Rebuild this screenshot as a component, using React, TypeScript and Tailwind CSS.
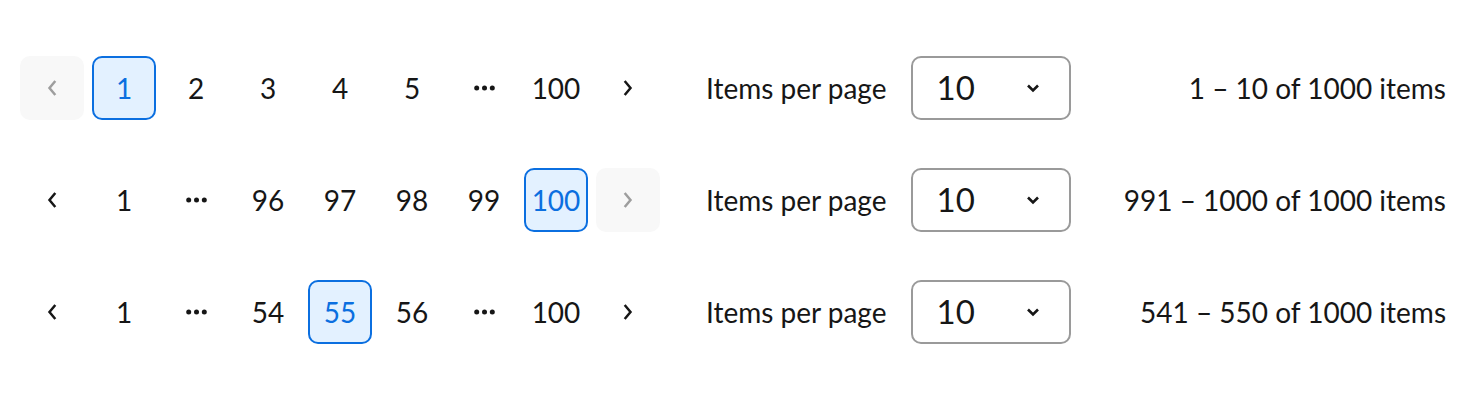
import React from 'react';

type PageItem = number | 'dots';

interface RowProps {
  pages: PageItem[];
  current: number;
  prevDisabled?: boolean;
  nextDisabled?: boolean;
  range: string;
}

const Chevron = ({ dir, disabled }: { dir: 'left' | 'right'; disabled?: boolean }) => (
  <svg width="12" height="18" viewBox="0 0 12 18" fill="none" className={disabled ? 'text-[#9e9e9e]' : 'text-[#161616]'}>
    <polyline
      points={dir === 'left' ? '8.5,3 3.5,9 8.5,15' : '3.5,3 8.5,9 3.5,15'}
      stroke="currentColor"
      strokeWidth="2.5"
      strokeLinecap="square"
      strokeLinejoin="miter"
    />
  </svg>
);

const Dots = () => (
  <svg width="21" height="6" viewBox="0 0 21 6">
    <circle cx="2.7" cy="3" r="2.5" fill="#161616" />
    <circle cx="10.5" cy="3" r="2.5" fill="#161616" />
    <circle cx="18.3" cy="3" r="2.5" fill="#161616" />
  </svg>
);

const NavButton = ({ dir, disabled }: { dir: 'left' | 'right'; disabled?: boolean }) => (
  <button
    className={`w-16 h-16 flex items-center justify-center rounded-[10px] ${disabled ? 'bg-[#f8f8f8]' : 'bg-white'}`}
  >
    <Chevron dir={dir} disabled={disabled} />
  </button>
);

const PaginationRow: React.FC<RowProps> = ({ pages, current, prevDisabled, nextDisabled, range }) => (
  <div className="flex items-center h-16 px-5">
    {/* Pager */}
    <div className="flex items-center gap-2">
      <NavButton dir="left" disabled={prevDisabled} />
      {pages.map((p, i) =>
        p === 'dots' ? (
          <div key={i} className="w-16 h-16 flex items-center justify-center">
            <Dots />
          </div>
        ) : (
          <button
            key={i}
            className={`w-16 h-16 flex items-center justify-center rounded-[10px] text-[28px] ${
              p === current
                ? 'bg-[#e3f1ff] border-2 border-[#0b6fe0] text-[#0b6fe0]'
                : 'text-[#161616]'
            }`}
          >
            {p}
          </button>
        )
      )}
      <NavButton dir="right" disabled={nextDisabled} />
    </div>

    {/* Items per page */}
    <div className="flex items-center ml-[46px] gap-6">
      <span className="text-[28px] text-[#161616]">Items per page</span>
      <div className="w-40 h-16 flex items-center justify-between pl-6 pr-7 rounded-[10px] border-2 border-[#9a9a9a] bg-white">
        <span className="text-[33px] text-[#161616]">10</span>
        <svg width="16" height="10" viewBox="0 0 16 10" fill="none">
          <polyline points="3,2.5 8,7.5 13,2.5" stroke="#161616" strokeWidth="2.6" />
        </svg>
      </div>
    </div>

    {/* Range */}
    <span className="ml-auto text-[28px] text-[#161616]">{range}</span>
  </div>
);

export default function App() {
  return (
    <div className="w-[1466px] h-[400px] bg-white pt-14 flex flex-col gap-12 font-['Lato',sans-serif]">
      <PaginationRow
        pages={[1, 2, 3, 4, 5, 'dots', 100]}
        current={1}
        prevDisabled
        range="1 – 10 of 1000 items"
      />
      <PaginationRow
        pages={[1, 'dots', 96, 97, 98, 99, 100]}
        current={100}
        nextDisabled
        range="991 – 1000 of 1000 items"
      />
      <PaginationRow
        pages={[1, 'dots', 54, 55, 56, 'dots', 100]}
        current={55}
        range="541 – 550 of 1000 items"
      />
    </div>
  );
}
